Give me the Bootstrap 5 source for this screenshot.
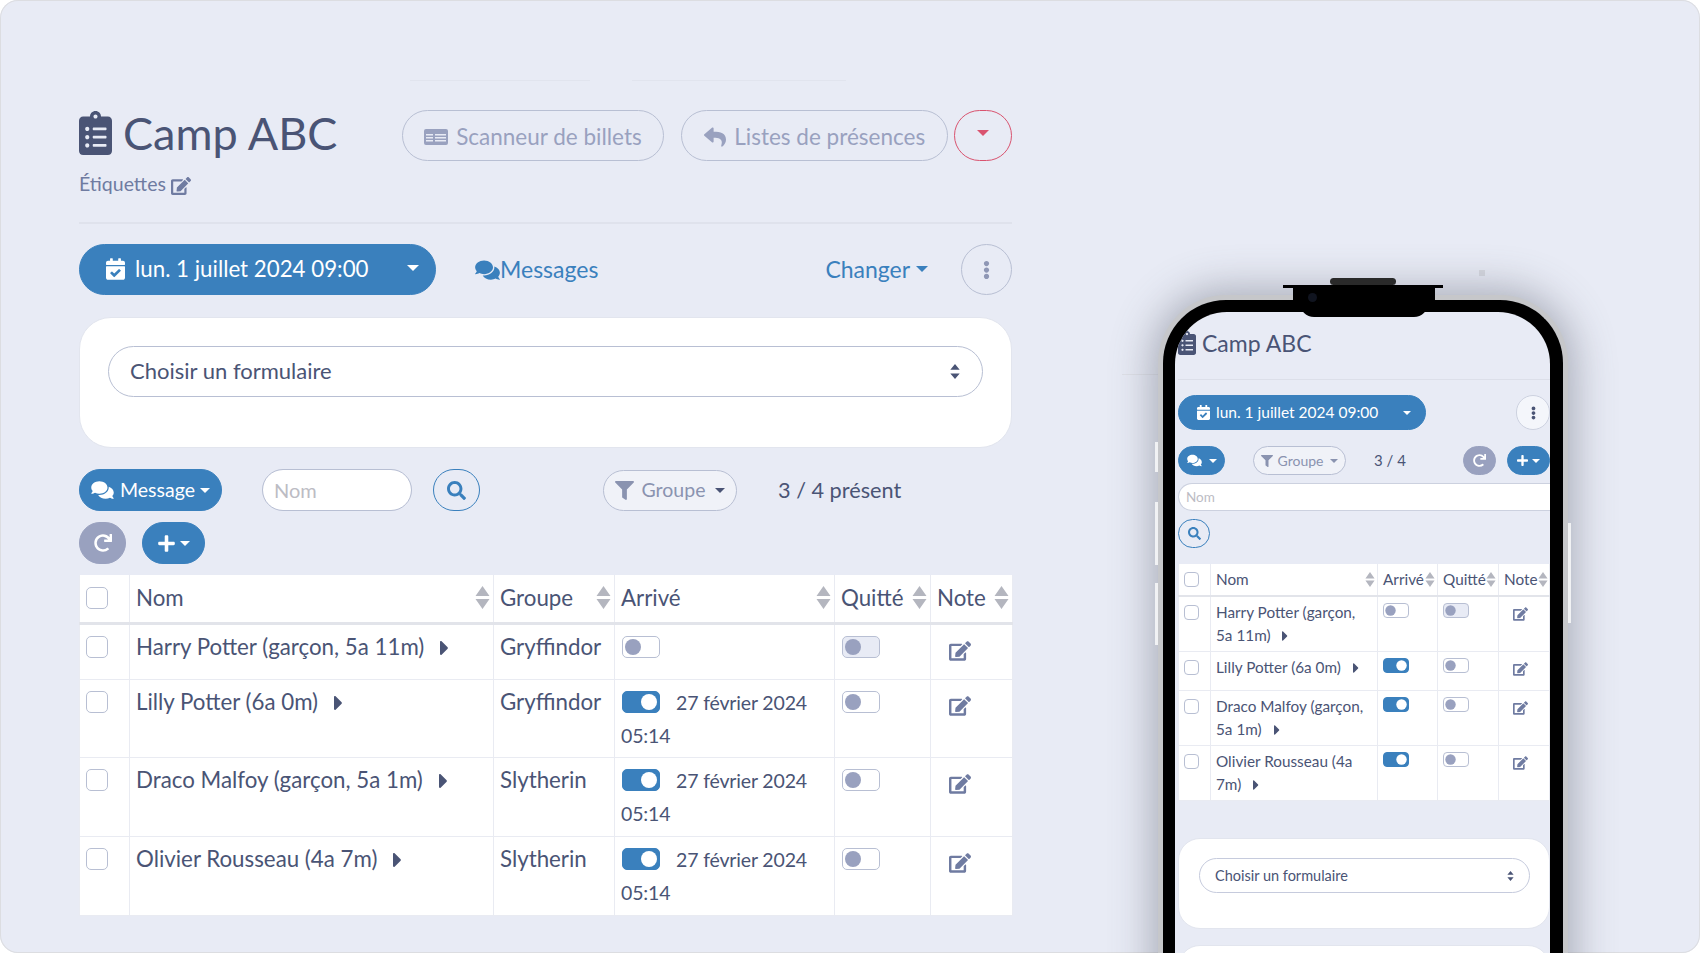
<!DOCTYPE html>
<html lang="fr">

<head>
  <meta charset="UTF-8" />
  <meta name="viewport" content="width=device-width, initial-scale=1" />
  <title>Camp ABC</title>
  <link href="https://cdn.jsdelivr.net/npm/bootstrap@5.3.3/dist/css/bootstrap.min.css" rel="stylesheet">
  <style>
    :root {
      --fond: #e8ebf5;
      --bleu: #3a80bd;
      --encre: #4a5475;
      --gris: #99a1bf;
      --trait: #b8bfd3;
      --ligne: #e9ebf2;
    }

    body {
      margin: 0;
      background: #fff;
      font-family: "Lato", "Liberation Sans", sans-serif;
      color: var(--encre);
      overflow: hidden;
    }

    .ico {
      fill: currentColor;
      flex: none;
    }

    .stage {
      width: 1700px;
      height: 953px;
      background: var(--fond);
      border-radius: 18px;
      box-shadow: inset 0 0 0 1px #dcdde1;
      overflow: hidden;
      position: relative;
    }

    /* traces pales du fond */
    .speck {
      position: absolute;
      background: #d6d8e0;
    }

    .speck-a {
      left: 1479px;
      top: 270px;
      width: 6px;
      height: 6px;
    }

    .speck-b {
      left: 410px;
      top: 80px;
      width: 180px;
      height: 1px;
      background: #e1e4ee;
    }

    .speck-c {
      left: 632px;
      top: 80px;
      width: 214px;
      height: 1px;
      background: #e1e4ee;
    }

    .speck-d {
      left: 1122px;
      top: 374px;
      width: 36px;
      height: 1px;
      background: #dfe1e8;
    }

    /* colonne de gauche */
    .desk {
      width: 933px;
      margin-left: 79px;
      padding-top: 110px;
      flex: none;
    }

    .title-box {
      width: 323px;
      height: 88px;
    }

    .camp-title {
      font-size: 45px;
      line-height: 46px;
      margin: 0;
      font-weight: 400;
      color: var(--encre);
    }

    .camp-title .ico {
      width: 33px;
      height: 44px;
      margin-right: 11px;
    }

    .tags {
      margin-top: 15px;
      font-size: 19.5px;
      line-height: 26px;
      color: #6f7ba1;
    }

    .tags .ico {
      width: 20px;
      height: 18px;
    }

    .pill {
      height: 51px;
      font-size: 22.5px;
      line-height: 1;
      --bs-btn-padding-y: 0;
    }

    .pill-ghost {
      border: 1px solid var(--trait);
      color: var(--gris);
      background: transparent;
    }

    .btn-scan {
      width: 263px;
      margin-right: 17px;
      padding-top: 3px;
    }

    .btn-scan .ico {
      width: 24px;
      height: 16px;
      margin-right: 8px;
    }

    .btn-presence {
      width: 267px;
      margin-right: 6px;
      padding-top: 3px;
    }

    .btn-presence .ico {
      width: 22px;
      height: 22px;
      margin-right: 8px;
    }

    .btn-red {
      width: 58px;
      border: 1px solid #d9536f;
      color: #d9536f;
      background: transparent;
    }

    .btn-red::after {
      margin-left: 0;
      margin-top: -6px;
    }

    .sep {
      height: 2px;
      margin: 24px 0 20px;
      background: #dfe2ec;
    }

    .btn-blue {
      background: var(--bleu);
      border: 1px solid var(--bleu);
      color: #fff;
    }

    .btn-blue:hover {
      background: var(--bleu);
      color: #fff;
    }

    .btn-date {
      width: 357px;
      padding: 0 16px 0 26px;
      justify-content: space-between;
      font-size: 22.3px;
    }

    .btn-date .ico {
      width: 19px;
      height: 22px;
      margin-right: 10px;
    }

    .btn-date::after {
      margin-left: 0;
      margin-top: -4px;
    }

    .link-msg {
      margin-left: 39px;
      font-size: 23px;
      color: var(--bleu);
      text-decoration: none;
    }

    .link-msg .ico {
      width: 25px;
      height: 22px;
    }

    .link-change {
      margin-left: auto;
      margin-right: 33px;
      font-size: 23px;
      color: var(--bleu);
      text-decoration: none;
    }

    .btn-dots {
      width: 51px;
      padding: 0;
      color: #8f97b5;
    }

    .btn-dots .ico {
      width: 7px;
      height: 20px;
    }

    .form-box {
      margin-top: 22px;
      height: 131px;
      padding: 28px 28px 0 28px;
      border: 1px solid #e2e5ee;
      border-radius: 32px;
    }

    .form-box .form-select {
      height: 51px;
      border-radius: 26px;
      border-color: var(--trait);
      color: var(--encre);
      font-size: 22px;
      padding: 0 21px 2px;
      background-image: url("data:image/svg+xml,%3csvg xmlns='http://www.w3.org/2000/svg' viewBox='0 0 10 16'%3e%3cpath fill='%234a5475' d='M5 0l5 6H0zM5 16L0 10h10z'/%3e%3c/svg%3e");
      background-size: 10px 15px;
      background-position: right 22px center;
    }

    .tools {
      margin-top: 21px;
    }

    .tool-row {
      height: 42px;
    }

    .tool-btn {
      height: 42px;
      font-size: 19.5px;
      line-height: 1;
      padding: 0;
    }

    .tool-btn::after {
      margin-left: 5px;
    }

    .btn-msg {
      width: 143px;
    }

    .btn-msg .ico {
      width: 23px;
      height: 20px;
      margin-right: 6px;
    }

    .search-name {
      width: 150px;
      height: 42px;
      margin-left: 40px;
      border-radius: 21px;
      border-color: var(--trait);
      font-size: 20px;
      padding: 0 11px;
    }

    .search-name::placeholder {
      color: #bcbcc4;
    }

    .btn-search {
      width: 47px;
      margin-left: 21px;
      border: 1px solid var(--bleu);
      color: var(--bleu);
      background: transparent;
    }

    .btn-search .ico {
      width: 19px;
      height: 19px;
    }

    .btn-group-filter {
      width: 134px;
      height: 41px;
      margin-left: 123px;
      border: 1px solid var(--trait);
      background: #f0f2f8;
      color: #8a93b0;
    }

    .btn-group-filter::after {
      color: var(--encre);
      margin-left: 10px;
    }

    .btn-group-filter .ico {
      width: 19px;
      height: 19px;
      margin-right: 8px;
    }

    .count {
      margin-left: 41px;
      font-size: 21.7px;
    }

    .tool-row-2 {
      margin-top: 11px;
    }

    .btn-reload {
      width: 47px;
      background: var(--gris);
      border: 1px solid var(--gris);
      color: #fff;
      margin-right: 16px;
    }

    .btn-reload .ico {
      width: 18px;
      height: 18px;
    }

    .btn-add {
      width: 63px;
    }

    .btn-add .ico {
      width: 17px;
      height: 19px;
    }

    /* tableau */
    .roster {
      table-layout: fixed;
      width: 933px;
      margin: 11px 0 0;
      background: #fff;
      --bs-table-bg: #fff;
      --bs-table-color: var(--encre);
      --bs-border-color: var(--ligne);
      font-size: 22.3px;
      line-height: 33px;
    }

    .roster th {
      font-weight: 400;
      height: 48px;
      padding: 6px 3px 0 6px;
      border-bottom: 3px solid #e2e4ea;
      vertical-align: top;
    }

    .roster td {
      padding: 5px 6px 0;
      vertical-align: top;
    }

    .roster thead tr {
      border-width: 0;
    }

    .roster tbody td {
      height: 78.7px;
    }

    .roster tbody>tr:first-child td {
      height: 56px;
    }

    .w-check {
      width: 50px;
    }

    .w-name {
      width: 364px;
    }

    .w-group {
      width: 121px;
    }

    .w-arrive {
      width: 220px;
    }

    .w-left {
      width: 96px;
    }

    .w-note {
      width: 82px;
    }

    .head-cell {
      display: flex;
      justify-content: space-between;
      align-items: center;
      height: 33px;
    }

    .sort {
      width: 15px;
      height: 23px;
      fill: #b4b6bf;
      flex: none;
    }

    .roster .form-check-input[type=checkbox] {
      width: 22px;
      height: 22px;
      margin: 6px 0 0 0;
      border: 1px solid var(--trait);
      border-radius: 5px;
      background-color: #fff;
    }

    .roster .form-check-input[role=switch] {
      --bs-form-switch-bg: url("data:image/svg+xml,%3csvg xmlns='http://www.w3.org/2000/svg' viewBox='-4 -4 8 8'%3e%3ccircle r='3.2' fill='%2399a1bf'/%3e%3c/svg%3e");
      width: 38px;
      height: 22px;
      margin: 0 16px 0 1px !important;
      vertical-align: -3px;
      border: 1px solid var(--trait);
      background-color: #fff;
    }

    .roster .form-check-input[role=switch]:checked {
      --bs-form-switch-bg: url("data:image/svg+xml,%3csvg xmlns='http://www.w3.org/2000/svg' viewBox='-4 -4 8 8'%3e%3ccircle r='3.2' fill='%23fff'/%3e%3c/svg%3e");
      background-color: var(--bleu);
      border-color: var(--bleu);
    }

    .roster .form-check-input.sw-soft {
      background-color: var(--fond);
    }

    .roster .arrow {
      width: 9px;
      height: 24px;
      margin-left: 10px;
      vertical-align: -5px;
    }

    .arrive-date {
      font-size: 19.5px;
      letter-spacing: -.15px;
      line-height: 1;
    }

    .note-ico {
      width: 22px;
      height: 20px;
      color: #6f7ba1;
      margin: 11px 0 0 12px;
      display: block;
    }

    /* téléphone */
    .phone {
      position: relative;
      flex: none;
      width: 410px;
      height: 700px;
      margin: 295px 0 0 146px;
      border: 5px solid #c6c7ca;
      border-bottom: 0;
      border-radius: 68px 68px 0 0;
      box-shadow: 0 0 40px 6px rgba(90, 95, 110, .45);
      background: #000;
      padding: 12px 13px 0 12px;
    }

    .phone-screen {
      height: 100%;
      border-radius: 52px 52px 0 0;
      background: var(--fond);
      overflow: hidden;
      padding: 0 0 0 3px;
      font-size: 15px;
    }

    .notch {
      position: absolute;
      left: 130px;
      top: -15px;
      width: 142px;
      height: 24px;
      background: #000;
    }

    .notch::before {
      content: "";
      position: absolute;
      left: -10px;
      right: -8px;
      top: 0;
      height: 3px;
      background: #000;
    }

    .notch::after {
      content: "";
      position: absolute;
      left: 7px;
      right: 7px;
      top: 18px;
      height: 14px;
      background: #000;
      border-radius: 0 0 14px 14px;
    }

    .speaker {
      position: absolute;
      left: 37px;
      top: -7px;
      width: 66px;
      height: 7px;
      background: #2a2a2a;
      border-radius: 4px;
    }

    .camera {
      position: absolute;
      left: 15px;
      top: 8px;
      width: 9px;
      height: 9px;
      border-radius: 50%;
      background: #10141f;
      z-index: 1;
    }

    .side-key {
      position: absolute;
      width: 3px;
      background: #f1f2f4;
    }

    .key-a {
      left: -8px;
      top: 142px;
      height: 30px;
    }

    .key-b {
      left: -8px;
      top: 202px;
      height: 63px;
    }

    .key-c {
      left: -8px;
      top: 283px;
      height: 62px;
    }

    .key-d {
      right: -8px;
      top: 223px;
      height: 100px;
    }

    .m-title {
      font-size: 23px;
      line-height: 30px;
      padding-top: 16px;
      height: 67px;
      color: var(--encre);
      font-weight: 400;
      margin: 0;
    }

    .m-title .ico {
      width: 18px;
      height: 24px;
      margin-right: 6px;
      vertical-align: -3px;
    }

    .m-sep {
      height: 1px;
      background: #dcdfe9;
    }

    .m-row {
      height: 35px;
      margin-top: 15px;
    }

    .m-date {
      width: 248px;
      height: 35px;
      font-size: 15.5px;
      padding: 0 14px 0 18px;
      justify-content: space-between;
      line-height: 1;
    }

    .m-date .ico {
      width: 13px;
      height: 15px;
      margin-right: 6px;
    }

    .m-date::after {
      margin-left: 0;
    }

    .m-dots {
      width: 34px;
      height: 35px;
      padding: 0;
      margin-left: auto;
      border: 1px solid #ccd1df;
      background: #f4f6fb;
      color: var(--encre);
    }

    .m-dots .ico {
      width: 5px;
      height: 14px;
    }

    .m-tools {
      height: 29px;
      margin-top: 16px;
    }

    .m-btn {
      height: 29px;
      padding: 0;
      font-size: 14px;
      line-height: 1;
    }

    .m-btn::after {
      margin-left: 7px;
    }

    .m-msg {
      width: 47px;
    }

    .m-msg .ico {
      width: 15px;
      height: 13px;
    }

    .m-filter {
      width: 93px;
      margin-left: 28px;
      border: 1px solid var(--trait);
      background: #f0f2f8;
      color: #8a93b0;
    }

    .m-filter .ico {
      width: 12px;
      height: 12px;
      margin-right: 5px;
    }

    .m-count {
      margin-left: 28px;
      font-size: 15px;
    }

    .m-reload {
      width: 33px;
      margin-left: auto;
      background: var(--gris);
      border: 1px solid var(--gris);
      color: #fff;
    }

    .m-reload .ico {
      width: 13px;
      height: 13px;
    }

    .m-add {
      width: 43px;
      margin-left: 11px;
    }

    .m-add .ico {
      width: 11px;
      height: 13px;
    }

    .m-add::after {
      margin-left: 4px;
    }

    .m-input {
      height: 28px;
      margin-top: 8px;
      border-radius: 14px 0 0 14px;
      border-color: #ccd1df;
      border-right: 0;
      font-size: 13.5px;
      padding: 0 7px;
    }

    .m-input::placeholder {
      color: #bcbcc4;
    }

    .m-search {
      width: 32px;
      height: 29px;
      margin-top: 8px;
      border: 1px solid var(--bleu);
      color: var(--bleu);
      background: transparent;
      padding: 0;
    }

    .m-search .ico {
      width: 13px;
      height: 13px;
    }

    .roster.m-table {
      width: 371px;
      margin-top: 16px;
      font-size: 15.3px;
      line-height: 22.5px;
    }

    .m-table th {
      height: 32px;
      padding: 4px 2px 0 5px;
      border-bottom-width: 2px;
    }

    .m-table td {
      padding: 4px 5px 5px;
    }

    .m-table .head-cell {
      height: 22px;
    }

    .m-table .sort {
      width: 10px;
      height: 15px;
    }

    .roster.m-table tbody>tr td {
      height: 39px;
    }

    .m-check {
      width: 32px;
    }

    .m-name {
      width: 167px;
    }

    .m-arrive {
      width: 60px;
    }

    .m-left {
      width: 61px;
    }

    .m-note {
      width: 51px;
    }

    .m-table .form-check-input[type=checkbox] {
      width: 15px;
      height: 15px;
      margin: 4px 0 0 0;
      border-radius: 4px;
    }

    .m-table .form-check-input[role=switch] {
      width: 26px;
      height: 15px;
      margin: 0 !important;
      vertical-align: 0;
    }

    .m-table .arrow {
      width: 6px;
      height: 16px;
      margin-left: 8px;
      vertical-align: -3px;
    }

    .m-table .note-ico {
      width: 15px;
      height: 14px;
      margin: 6px 0 0 9px;
    }

    .m-form {
      height: 91px;
      margin-top: 37px;
      padding: 19px 19px 0 20px;
      border: 1px solid #e2e5ee;
      border-radius: 22px;
    }

    .m-form .form-select {
      height: 35px;
      border-radius: 18px;
      border-color: #c6cbdd;
      color: var(--encre);
      font-size: 14.5px;
      padding: 0 15px;
      background-image: url("data:image/svg+xml,%3csvg xmlns='http://www.w3.org/2000/svg' viewBox='0 0 10 16'%3e%3cpath fill='%234a5475' d='M5 0l5 6H0zM5 16L0 10h10z'/%3e%3c/svg%3e");
      background-size: 7px 10px;
      background-position: right 15px center;
    }

    .m-next {
      height: 60px;
      margin-top: 16px;
      border: 1px solid #e2e5ee;
      border-radius: 22px;
    }
  </style>
</head>

<body>
  <svg width="0" height="0" class="position-absolute">
    <symbol id="i-clip" viewBox="0 0 384 512"><path d="M336 64h-80c0-35.3-28.7-64-64-64s-64 28.7-64 64H48C21.5 64 0 85.5 0 112v352c0 26.5 21.5 48 48 48h288c26.5 0 48-21.5 48-48V112c0-26.5-21.5-48-48-48zM96 424c-13.3 0-24-10.7-24-24s10.7-24 24-24 24 10.7 24 24-10.7 24-24 24zm0-96c-13.3 0-24-10.7-24-24s10.7-24 24-24 24 10.7 24 24-10.7 24-24 24zm0-96c-13.3 0-24-10.7-24-24s10.7-24 24-24 24 10.7 24 24-10.7 24-24 24zm96-192c13.3 0 24 10.7 24 24s-10.7 24-24 24-24-10.7-24-24 10.7-24 24-24zm128 368c0 4.4-3.6 8-8 8H168c-4.4 0-8-3.6-8-8v-16c0-4.4 3.6-8 8-8h144c4.4 0 8 3.6 8 8v16zm0-96c0 4.4-3.6 8-8 8H168c-4.4 0-8-3.6-8-8v-16c0-4.4 3.6-8 8-8h144c4.4 0 8 3.6 8 8v16zm0-96c0 4.4-3.6 8-8 8H168c-4.4 0-8-3.6-8-8v-16c0-4.4 3.6-8 8-8h144c4.4 0 8 3.6 8 8v16z"/></symbol>
    <symbol id="i-edit" viewBox="0 0 576 512"><path d="M402.6 83.2l90.2 90.2c3.8 3.8 3.8 10 0 13.8L274.4 405.6l-92.8 10.3c-12.4 1.4-22.9-9.1-21.5-21.5l10.3-92.8L388.8 83.2c3.8-3.8 10-3.8 13.8 0zm162-22.9l-48.8-48.8c-15.2-15.2-39.9-15.2-55.2 0l-35.4 35.4c-3.8 3.8-3.8 10 0 13.8l90.2 90.2c3.8 3.8 10 3.8 13.8 0l35.4-35.4c15.2-15.3 15.2-40 0-55.2zM384 346.2V448H64V128h229.8c3.2 0 6.2-1.3 8.5-3.5l40-40c7.6-7.6 2.2-20.5-8.5-20.5H48C21.5 64 0 85.5 0 112v352c0 26.5 21.5 48 48 48h352c26.5 0 48-21.5 48-48V306.2c0-10.7-12.9-16-20.5-8.5l-40 40c-2.2 2.3-3.5 5.3-3.5 8.5z"/></symbol>
    <symbol id="i-cal" viewBox="0 0 448 512"><path d="M436 160H12c-6.627 0-12-5.373-12-12v-36c0-26.51 21.49-48 48-48h48V12c0-6.627 5.373-12 12-12h40c6.627 0 12 5.373 12 12v52h128V12c0-6.627 5.373-12 12-12h40c6.627 0 12 5.373 12 12v52h48c26.51 0 48 21.49 48 48v36c0 6.627-5.373 12-12 12zM12 192h424c6.627 0 12 5.373 12 12v260c0 26.51-21.49 48-48 48H48c-26.51 0-48-21.49-48-48V204c0-6.627 5.373-12 12-12zm333.296 95.947l-28.169-28.398c-4.667-4.705-12.265-4.736-16.97-.068L194.12 364.665l-45.98-46.352c-4.667-4.705-12.266-4.736-16.971-.068l-28.397 28.17c-4.705 4.667-4.736 12.265-.068 16.97l82.601 83.269c4.667 4.705 12.265 4.736 16.97.068l142.953-141.805c4.705-4.667 4.736-12.265.068-16.97z"/></symbol>
    <symbol id="i-chat" viewBox="0 0 576 512"><path d="M416 192c0-88.4-93.1-160-208-160S0 103.6 0 192c0 34.3 14.1 65.9 38 92-13.4 30.2-35.5 54.2-35.8 54.5-2.2 2.3-2.8 5.7-1.5 8.7S4.8 352 8 352c36.6 0 66.9-12.3 88.7-25 32.2 15.7 70.3 25 111.3 25 114.9 0 208-71.6 208-160zm122 220c23.9-26 38-57.7 38-92 0-66.9-53.5-124.2-129.3-148.1.9 6.6 1.3 13.3 1.3 20.1 0 105.9-107.7 192-240 192-10.8 0-21.3-.8-31.7-1.9C207.8 439.6 281.8 480 368 480c41 0 79.1-9.2 111.3-25 21.8 12.7 52.1 25 88.7 25 3.2 0 6.1-1.9 7.3-4.8 1.3-2.9.7-6.3-1.5-8.7-.3-.3-22.4-24.2-35.8-54.5z"/></symbol>
    <symbol id="i-reply" viewBox="0 0 512 512"><path d="M8.309 189.836L184.313 37.851C199.719 24.546 224 35.347 224 56.015v80.053c160.629 1.839 288 34.032 288 186.258 0 61.441-39.581 122.309-83.333 154.132-13.653 9.931-33.111-2.533-28.077-18.631 45.344-145.012-21.507-183.51-176.59-185.742V360c0 20.7-24.3 31.453-39.687 18.164l-176.004-152c-11.071-9.562-11.086-26.753 0-36.328z"/></symbol>
    <symbol id="i-search" viewBox="0 0 512 512"><path d="M505 442.7L405.3 343c-4.5-4.5-10.6-7-17-7H372c27.6-35.3 44-79.7 44-128C416 93.1 322.9 0 208 0S0 93.1 0 208s93.1 208 208 208c48.3 0 92.7-16.4 128-44v16.3c0 6.4 2.5 12.5 7 17l99.7 99.7c9.4 9.4 24.6 9.4 33.9 0l28.3-28.3c9.4-9.4 9.4-24.6.1-34zM208 336c-70.7 0-128-57.2-128-128 0-70.7 57.2-128 128-128 70.7 0 128 57.2 128 128 0 70.7-57.2 128-128 128z"/></symbol>
    <symbol id="i-filter" viewBox="0 0 512 512"><path d="M487.976 0H24.028C2.71 0-8.047 25.866 7.058 40.971L192 225.941V432c0 7.831 3.821 15.17 10.237 19.662l80 55.98C298.02 518.69 320 507.493 320 487.98V225.941l184.947-184.97C520.021 25.896 509.338 0 487.976 0z"/></symbol>
    <symbol id="i-plus" viewBox="0 0 448 512"><path d="M416 208H272V64c0-17.67-14.33-32-32-32h-32c-17.67 0-32 14.33-32 32v144H32c-17.67 0-32 14.33-32 32v32c0 17.67 14.33 32 32 32h144v144c0 17.67 14.33 32 32 32h32c17.67 0 32-14.33 32-32V304h144c17.67 0 32-14.33 32-32v-32c0-17.67-14.33-32-32-32z"/></symbol>
    <symbol id="i-redo" viewBox="0 0 512 512"><path d="M500.33 0h-47.41a12 12 0 0 0-12 12.57l4 82.76A247.42 247.42 0 0 0 256 8C119.34 8 7.9 119.53 8 256.19 8.1 393.07 119.1 504 256 504a247.1 247.1 0 0 0 166.18-63.91 12 12 0 0 0 .48-17.43l-34-34a12 12 0 0 0-16.38-.55A176 176 0 1 1 402.1 157.8l-101.53-4.87a12 12 0 0 0-12.57 12v47.41a12 12 0 0 0 12 12h200.33a12 12 0 0 0 12-12V12a12 12 0 0 0-12-12z"/></symbol>
    <symbol id="i-dots" viewBox="0 0 192 512"><path d="M96 184c39.8 0 72 32.2 72 72s-32.2 72-72 72-72-32.2-72-72 32.2-72 72-72zM24 80c0 39.8 32.2 72 72 72s72-32.2 72-72S135.8 8 96 8 24 40.2 24 80zm0 352c0 39.8 32.2 72 72 72s72-32.2 72-72-32.2-72-72-72-72 32.2-72 72z"/></symbol>
    <symbol id="i-caret" viewBox="0 0 192 512"><path d="M0 384.662V127.338c0-17.818 21.543-26.741 34.142-14.142l128.662 128.662c7.81 7.81 7.81 20.474 0 28.284L34.142 398.804C21.543 411.404 0 402.48 0 384.662z"/></symbol>
    <symbol id="i-ticket" viewBox="0 0 24 16"><path fill-rule="evenodd" d="M2 0h20a2 2 0 0 1 2 2v12a2 2 0 0 1-2 2H2a2 2 0 0 1-2-2V2a2 2 0 0 1 2-2zM2 5v1.500h7V5zM2 8v1.500h7V8zM2 11v1.500h7V11zM11 5v1.500h11V5zM11 8v1.500h11V8zM11 11v1.500h11V11z"/></symbol>
    <symbol id="i-sort" viewBox="0 0 15 23"><path d="M7.500 0l7 10H.5zM7.500 23l-7-10h14z"/></symbol>
  </svg>

  <div class="stage d-flex">
    <div class="speck speck-a"></div>
    <div class="speck speck-b"></div>
    <div class="speck speck-c"></div>
    <div class="speck speck-d"></div>

    <div class="desk">
      <div class="d-flex align-items-start">
        <div class="title-box">
          <h1 class="camp-title d-flex align-items-center"><svg class="ico"><use href="#i-clip"/></svg>Camp ABC</h1>
          <div class="tags">Étiquettes <svg class="ico"><use href="#i-edit"/></svg></div>
        </div>
        <button class="btn rounded-pill pill pill-ghost btn-scan d-inline-flex align-items-center justify-content-center"><svg class="ico"><use href="#i-ticket"/></svg>Scanneur de billets</button>
        <button class="btn rounded-pill pill pill-ghost btn-presence d-inline-flex align-items-center justify-content-center"><svg class="ico"><use href="#i-reply"/></svg>Listes de présences</button>
        <button class="btn rounded-pill pill btn-red dropdown-toggle d-inline-flex align-items-center justify-content-center"></button>
      </div>

      <div class="sep"></div>

      <div class="d-flex align-items-center">
        <button class="btn rounded-pill pill btn-blue btn-date dropdown-toggle d-inline-flex align-items-center"><span class="d-flex align-items-center"><svg class="ico"><use href="#i-cal"/></svg>lun. 1 juillet 2024 09:00</span></button>
        <a href="#" class="link-msg d-inline-flex align-items-center"><svg class="ico"><use href="#i-chat"/></svg>Messages</a>
        <a href="#" class="link-change dropdown-toggle">Changer</a>
        <button class="btn rounded-pill pill pill-ghost btn-dots d-inline-flex align-items-center justify-content-center"><svg class="ico"><use href="#i-dots"/></svg></button>
      </div>

      <div class="form-box bg-white">
        <select class="form-select">
          <option>Choisir un formulaire</option>
        </select>
      </div>

      <div class="tools">
        <div class="tool-row d-flex align-items-center">
          <button class="btn rounded-pill tool-btn btn-blue btn-msg dropdown-toggle d-inline-flex align-items-center justify-content-center"><svg class="ico"><use href="#i-chat"/></svg>Message</button>
          <input type="text" class="form-control search-name" placeholder="Nom">
          <button class="btn rounded-pill tool-btn btn-search d-inline-flex align-items-center justify-content-center"><svg class="ico"><use href="#i-search"/></svg></button>
          <button class="btn rounded-pill tool-btn btn-group-filter dropdown-toggle d-inline-flex align-items-center justify-content-center"><svg class="ico"><use href="#i-filter"/></svg>Groupe</button>
          <span class="count">3 / 4 présent</span>
        </div>
        <div class="tool-row tool-row-2 d-flex align-items-center">
          <button class="btn rounded-pill tool-btn btn-reload d-inline-flex align-items-center justify-content-center"><svg class="ico"><use href="#i-redo"/></svg></button>
          <button class="btn rounded-pill tool-btn btn-blue btn-add dropdown-toggle d-inline-flex align-items-center justify-content-center"><svg class="ico"><use href="#i-plus"/></svg></button>
        </div>
      </div>

      <table class="table table-bordered roster" id="tableDesk">
        <colgroup>
          <col class="w-check"><col class="w-name"><col class="w-group"><col class="w-arrive"><col class="w-left"><col class="w-note">
        </colgroup>
        <thead></thead>
        <tbody></tbody>
      </table>
    </div>

    <div class="phone">
      <span class="side-key key-a"></span>
      <span class="side-key key-b"></span>
      <span class="side-key key-c"></span>
      <span class="side-key key-d"></span>
      <div class="notch">
        <span class="speaker"></span>
        <span class="camera"></span>
      </div>

      <div class="phone-screen">
        <h2 class="m-title"><svg class="ico"><use href="#i-clip"/></svg>Camp ABC</h2>
        <div class="m-sep"></div>

        <div class="m-row d-flex">
          <button class="btn rounded-pill btn-blue m-date dropdown-toggle d-inline-flex align-items-center"><span class="d-flex align-items-center"><svg class="ico"><use href="#i-cal"/></svg>lun. 1 juillet 2024 09:00</span></button>
          <button class="btn rounded-pill m-dots d-inline-flex align-items-center justify-content-center"><svg class="ico"><use href="#i-dots"/></svg></button>
        </div>

        <div class="m-tools d-flex align-items-center">
          <button class="btn rounded-pill m-btn btn-blue m-msg dropdown-toggle d-inline-flex align-items-center justify-content-center"><svg class="ico"><use href="#i-chat"/></svg></button>
          <button class="btn rounded-pill m-btn m-filter dropdown-toggle d-inline-flex align-items-center justify-content-center"><svg class="ico"><use href="#i-filter"/></svg>Groupe</button>
          <span class="m-count">3 / 4</span>
          <button class="btn rounded-pill m-btn m-reload d-inline-flex align-items-center justify-content-center"><svg class="ico"><use href="#i-redo"/></svg></button>
          <button class="btn rounded-pill m-btn btn-blue m-add dropdown-toggle d-inline-flex align-items-center justify-content-center"><svg class="ico"><use href="#i-plus"/></svg></button>
        </div>

        <input type="text" class="form-control m-input" placeholder="Nom">
        <button class="btn rounded-pill m-search d-flex align-items-center justify-content-center"><svg class="ico"><use href="#i-search"/></svg></button>

        <table class="table table-bordered roster m-table" id="tablePhone">
          <colgroup>
            <col class="m-check"><col class="m-name"><col class="m-arrive"><col class="m-left"><col class="m-note">
          </colgroup>
          <thead></thead>
          <tbody></tbody>
        </table>

        <div class="m-form bg-white">
          <select class="form-select">
            <option>Choisir un formulaire</option>
          </select>
        </div>
        <div class="m-next bg-white"></div>
      </div>
    </div>
  </div>

  <script src="https://cdn.jsdelivr.net/npm/bootstrap@5.3.3/dist/js/bootstrap.bundle.min.js"></script>
  <script>
    const campeurs = [
      { nom: 'Harry Potter (garçon, 5a 11m)', groupe: 'Gryffindor', arrive: false, doux: true },
      { nom: 'Lilly Potter (6a 0m)', groupe: 'Gryffindor', arrive: true },
      { nom: 'Draco Malfoy (garçon, 5a 1m)', groupe: 'Slytherin', arrive: true },
      { nom: 'Olivier Rousseau (4a 7m)', groupe: 'Slytherin', arrive: true }
    ];

    const tri = '<svg class="sort"><use href="#i-sort"/></svg>';
    const entete = t => `<th><div class="head-cell">${t}${tri}</div></th>`;

    function remplir(id, avecGroupe, avecDate) {
      const table = document.getElementById(id);
      const cols = ['Nom'].concat(avecGroupe ? ['Groupe'] : [], ['Arrivé', 'Quitté', 'Note']);
      table.tHead.innerHTML = '<tr><th><input class="form-check-input" type="checkbox"></th>' + cols.map(entete).join('') + '</tr>';

      table.tBodies[0].innerHTML = campeurs.map(c => `
        <tr>
          <td><input class="form-check-input" type="checkbox"></td>
          <td>${c.nom} <svg class="ico arrow"><use href="#i-caret"/></svg></td>
          ${avecGroupe ? `<td>${c.groupe}</td>` : ''}
          <td><span class="form-switch p-0"><input class="form-check-input" type="checkbox" role="switch" ${c.arrive ? 'checked' : ''}></span>${c.arrive && avecDate ? '<span class="arrive-date">27 février 2024<br>05:14</span>' : ''}</td>
          <td><span class="form-switch p-0"><input class="form-check-input ${c.doux ? 'sw-soft' : ''}" type="checkbox" role="switch"></span></td>
          <td><svg class="ico note-ico"><use href="#i-edit"/></svg></td>
        </tr>`).join('');
    }

    remplir('tableDesk', true, true);
    remplir('tablePhone', false, false);
  </script>
</body>

</html>
